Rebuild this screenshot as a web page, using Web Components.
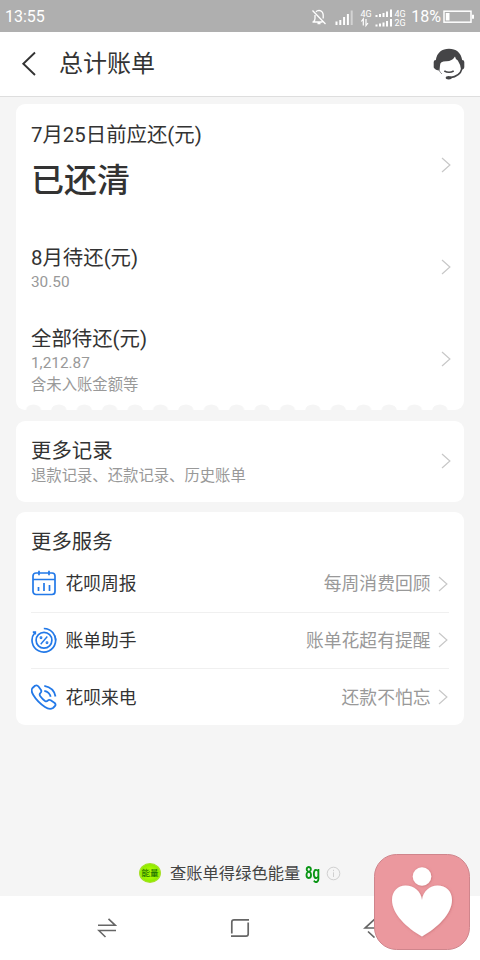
<!DOCTYPE html>
<html lang="zh-CN">
<head>
<meta charset="utf-8">
<title>总计账单</title>
<style>
html,body{margin:0;height:100%}
body{font-family:Roboto,"Noto Sans CJK SC",sans-serif;color:#333;background:#f5f5f5;overflow:hidden}
</style>
</head>
<body>
<bill-page></bill-page>
<script>
const define = (name, html) => customElements.define(name, class extends HTMLElement {
  constructor() {
    super();
    const t = document.createElement('template');
    t.innerHTML = html;
    this.attachShadow({mode: 'open'}).append(t.content.cloneNode(true));
  }
});

define('status-bar', `
<style>
:host{display:flex;height:32px;background:#afafaf;color:#fff;align-items:center;box-sizing:border-box;padding:1px 5px 0 5px;font-size:16px;line-height:32px}
.time{flex:1}
svg{display:block}
.pct{margin:1px 2px 0 5px;font-size:16px}
</style>
<span class="time">13:55</span>
<svg width="96" height="24" viewBox="310 3 96 24" fill="none" stroke="#fff">
  <path stroke-width="1.3" d="M312.500 20h10M313.500 19.500q1.500-1 1.500-3v-3.500M316 9.800q1.200-1.300 3-1.400q4 .6 4.200 4.600v3.500M317.500 21.500h3M312.500 8.500l13 13.500"/>
  <path stroke-width="2" d="M336.500 23v-3.500M340.300 23v-5M344.100 23v-8M347.900 23v-11"/>
  <path stroke-width="2" stroke-opacity=".45" d="M351.700 23V8.500"/>
  <path stroke-width="2" d="M376.500 15v-2M380 15v-3M383.500 15v-4M387 15v-5.500M391 15V7.500M376.500 24.500v-2M380 24.500v-3M383.500 24.500v-4M387 24.500v-5.500M391 24.500v-7.500"/>
  <path stroke-width="1.200" d="M363.300 23.500v-6.500l-2 2.500M366 17v6.500l2-2.500"/>
  <g fill="#fff" stroke="none" font-family="Roboto" font-size="9"><text x="360.500" y="15">4G</text><text x="394.500" y="15">4G</text><text x="394.500" y="24.300">2G</text></g>
</svg>
<span class="pct">18%</span>
<svg width="32" height="14" viewBox="0 0 32 14"><rect x="1" y="1.200" width="27" height="11" fill="none" stroke="#fff" stroke-width="1.500"/><path fill="#fff" d="M2.800 3h3.700v7.500H2.800zM29 4.800h2v4h-2z"/></svg>
`);

define('title-bar', `
<style>
:host{display:flex;height:65px;box-sizing:border-box;background:#fff;border-bottom:1px solid #dedede;align-items:center;padding:0 15px 0 20px}
h1{flex:1;margin:0 0 0 21px;font-size:24px;font-weight:400;line-height:64px}
svg{display:block}
</style>
<svg width="18" height="26" viewBox="0 0 18 26" fill="none" stroke="#333" stroke-width="1.900"><path d="M15 1.500L3.300 12.700 15 24"/></svg>
<h1><slot></slot></h1>
<svg width="32" height="32" viewBox="433 48 32 32">
  <path fill="#454547" d="M435.800 60C437 52.500 442 48.700 449 48.700S461 52.500 462.200 60Q464.300 60 464.300 62V67Q464.300 69.500 461 69.500Q460.300 64 457.800 60.500Q455.500 59.500 455 56.500Q452 61.500 446 61.300Q440 61.300 440 65.500L439.500 70.500Q435.500 70.500 433.700 67.500V62Q433.700 60 435.800 60Z"/>
  <path fill="none" stroke="#454547" stroke-width="1.600" d="M462 68.500Q460 76.500 450 77.600M444.300 71Q449 73.600 453.700 71"/>
  <ellipse cx="448.700" cy="77.700" rx="3" ry="1.700" fill="#454547"/>
  <path fill="none" stroke="#77777a" stroke-width=".8" d="M438.700 69.500Q440 72.500 442 74"/>
</svg>
`);

define('chevron-right', `
<style>:host{display:block;flex:none;width:10px;height:16px}svg{display:block}</style>
<svg width="10" height="16" viewBox="0 0 10 16" fill="none" stroke="#c8c8c8" stroke-width="1.200"><path d="M1 1L8.900 8 1 15"/></svg>
`);

define('bill-row', `
<style>
:host{display:flex;align-items:center;box-sizing:border-box;padding:0 13.500px 0 15px}
.text{flex:1;align-self:flex-start}
::slotted(*){display:block}
::slotted([slot=title]){font-size:20.400px;line-height:28px}
::slotted([slot=value]){font-size:33px;font-weight:500;line-height:44px}
::slotted([slot=note]){font-size:15.350px;line-height:21px;color:#999}
</style>
<div class="text"><slot name="title"></slot><slot name="value"></slot><slot name="note"></slot></div>
<chevron-right></chevron-right>
`);

define('bill-card', `
<style>:host{display:block;background:#fff;border-radius:9px;margin:0 16px;box-sizing:border-box}</style>
<slot></slot>
`);

define('ticket-edge', `
<style>
:host{display:block;position:absolute;left:0;right:0;bottom:0;height:6px}
svg{display:block}
</style>
<svg width="448" height="6" viewBox="0 0 448 6"><defs><pattern id="s" x="4.800" width="25.400" height="6" patternUnits="userSpaceOnUse"><ellipse cx="12.700" cy="6" rx="7.500" ry="5.500" fill="#f5f5f5"/></pattern></defs><rect x="4.800" width="431.800" height="6" fill="url(#s)"/></svg>
`);

define('service-row', `
<style>
:host{display:flex;align-items:center;height:56.500px;box-sizing:border-box;margin:0 15px 0 15px;padding-right:1.500px;font-size:17.800px;line-height:26px}
:host([divided]){border-bottom:1px solid #f0f0f0}
.icon{display:block;width:26px;height:28px;margin-right:8.500px}
.name,.hint{padding-top:1px}
.name{flex:1}
.hint{color:#999;margin-right:7px}
</style>
<span class="icon"><slot name="icon"></slot></span><span class="name"><slot></slot></span><span class="hint"><slot name="hint"></slot></span><chevron-right></chevron-right>
`);

define('energy-line', `
<style>
:host{display:flex;align-items:center;height:26px;padding-left:139px;font-size:16.300px;line-height:26px;color:#444}
.badge{width:20px;height:18px;border:1px solid #a5df25;border-radius:50%;background:radial-gradient(#a8f800 35%,#8fec00 65%,#c8f970);color:#257800;font-size:8.500px;line-height:18px;font-weight:500;text-align:center;margin-right:9px}
.label{padding-top:1px}
b{display:inline-block;color:#099514;font-size:18px;width:15px;margin:0 6px 0 5px;white-space:nowrap}
b span{display:inline-block;transform:scaleX(.73);transform-origin:0 50%}
svg{display:block}
</style>
<span class="badge">能量</span><span class="label">查账单得绿色能量</span><b><span>8g</span></b>
<svg width="15" height="15" viewBox="0 0 15 15" fill="none" stroke="#d0d0d0"><circle cx="7.500" cy="7.500" r="6.300"/><path d="M7.500 6.300v4.700M7.500 3.800v1.300"/></svg>
`);

define('nav-bar', `
<style>
:host{display:grid;grid-template-columns:repeat(3,133px);justify-content:center;justify-items:center;align-items:center;height:64px;background:#fff}
svg{display:block}
</style>
<svg width="20" height="20" viewBox="0 0 20 20" fill="none" stroke="#666" stroke-width="1.600"><path d="M1 7.300h17.300L11.500 .8M19 12.500H1.800L8.500 19"/></svg>
<svg width="20" height="20" viewBox="0 0 20 20" fill="none" stroke="#666" stroke-width="1.700"><path d="M1.800 15.500V4Q1.800 1.800 4 1.800H19M18.200 4.500V16Q18.200 18.200 16 18.200H1"/></svg>
<svg width="20" height="20" viewBox="0 0 20 20" fill="none" stroke="#666" stroke-width="1.700"><path d="M12 .8L2 10H19M5 13.500L11.500 19.500"/></svg>
`);

define('heart-float', `
<style>:host{display:block;position:absolute;left:372px;top:852px;width:100px;height:100px}svg{display:block}</style>
<svg width="100" height="100" viewBox="372 852 100 100">
  <defs><filter id="d" x="-20%" y="-20%" width="140%" height="140%"><feDropShadow dx=".5" dy=".5" stdDeviation="1" flood-color="#a84850" flood-opacity=".5"/></filter></defs>
  <rect x="374.500" y="854.500" width="95" height="95" rx="22" fill="#eb989e" stroke="#cf858c"/>
  <g fill="#fff" filter="url(#d)"><circle cx="422" cy="876.500" r="9.300"/><path d="M422 936.500C407 928 392 914 392 900C392 891 398 885.500 405.500 885.500C414 885.500 421 891 422 900C423 891 430 885.500 437.500 885.500C446 885.500 452 891 452 900C452 914 437 928 422 936.500Z"/></g>
</svg>
`);

define('bill-page', `
<style>
:host{display:flex;flex-direction:column;position:relative;width:480px;height:960px;background:#f5f5f5;overflow:hidden}
.summary{position:relative;height:306px;margin-top:7px}
.summary bill-row:nth-of-type(1){height:122px;padding-top:16px;padding-bottom:16px}
.summary [slot=value]{margin-top:10px}
.summary bill-row:nth-of-type(2){height:82px}
.summary bill-row:nth-of-type(3){height:102px}
.r1 [slot=title]{margin-top:1px}
.r2 [slot=title]{margin-top:18px}
.r3 [slot=title]{margin-top:17px}
.r3 [slot=note]:last-child{margin-top:.5px}
.records{height:81px;margin-top:11px}
.records bill-row{height:80px}
.records [slot=title]{margin-top:16px}
.records [slot=note]{margin-top:1px}
.services{height:213px;margin-top:10px}
h2{margin:0;padding:16px 15px 0;font-size:20.400px;font-weight:400;line-height:28px}
energy-line{margin-top:135px}
nav-bar{margin-top:auto}
svg{display:block}
</style>
<status-bar></status-bar>
<title-bar>总计账单</title-bar>
<bill-card class="summary">
  <bill-row class="r1"><span slot="title">7月25日前应还(元)</span><span slot="value">已还清</span></bill-row>
  <bill-row class="r2"><span slot="title">8月待还(元)</span><span slot="note">30.50</span></bill-row>
  <bill-row class="r3"><span slot="title">全部待还(元)</span><span slot="note">1,212.87</span><span slot="note">含未入账金额等</span></bill-row>
  <ticket-edge></ticket-edge>
</bill-card>
<bill-card class="records">
  <bill-row><span slot="title">更多记录</span><span slot="note">退款记录、还款记录、历史账单</span></bill-row>
</bill-card>
<bill-card class="services">
  <h2>更多服务</h2>
  <service-row divided><svg slot="icon" width="26" height="28" viewBox="0 0 26 28" fill="none" stroke="#2379e8" stroke-width="1.700"><rect x="2" y="3" width="22" height="21.500" rx="3"/><path d="M2 9.500h22M8 .8v4.500M18 .8v4.500M7.500 17v4M13 13v8M18.500 15v6"/></svg>花呗周报<span slot="hint">每周消费回顾</span></service-row>
  <service-row divided><svg slot="icon" width="26" height="28" viewBox="0 0 26 28" fill="none" stroke="#2379e8" stroke-width="1.700"><path d="M1.800 6.200H4.300V8.500M3.800 6.700A11.800 11.800 0 1 0 12.800 2.500A11.800 11.800 0 0 1 23.500 9.500"/><path d="M23.500 9.500A11.800 11.800 0 0 1 24.700 14.300"/><circle cx="13" cy="14.300" r="7.900"/><path stroke-width="1.400" d="M16.300 10.500L9.700 18.200"/><circle cx="10" cy="11.800" r=".9" stroke-width="1.100"/><circle cx="16" cy="16.800" r=".9" stroke-width="1.100"/></svg>账单助手<span slot="hint">账单花超有提醒</span></service-row>
  <service-row><svg slot="icon" width="26" height="28" viewBox="0 0 26 28" fill="none" stroke="#2379e8" stroke-width="1.800" stroke-linejoin="round"><path d="M1.500 5L4 2.800Q6 1.600 7.500 3.500L10 7Q10.900 8.700 9.300 10.200Q8 11.500 9.300 13.300Q11.500 16.300 14 18Q15.500 19 16.700 17.600Q18 16.300 19.700 17.300L23.700 20Q25.200 21.500 24 23L22 25Q18.500 27 14 24Q6.500 19 2.300 12Q-.5 7.500 1.500 5ZM13.300 2.800Q23 4.500 24.500 13.500M13.300 7.800Q18.500 8.800 19.700 13.800"/></svg>花呗来电<span slot="hint">还款不怕忘</span></service-row>
</bill-card>
<energy-line></energy-line>
<nav-bar></nav-bar>
<heart-float></heart-float>
`);
</script>
</body>
</html>
